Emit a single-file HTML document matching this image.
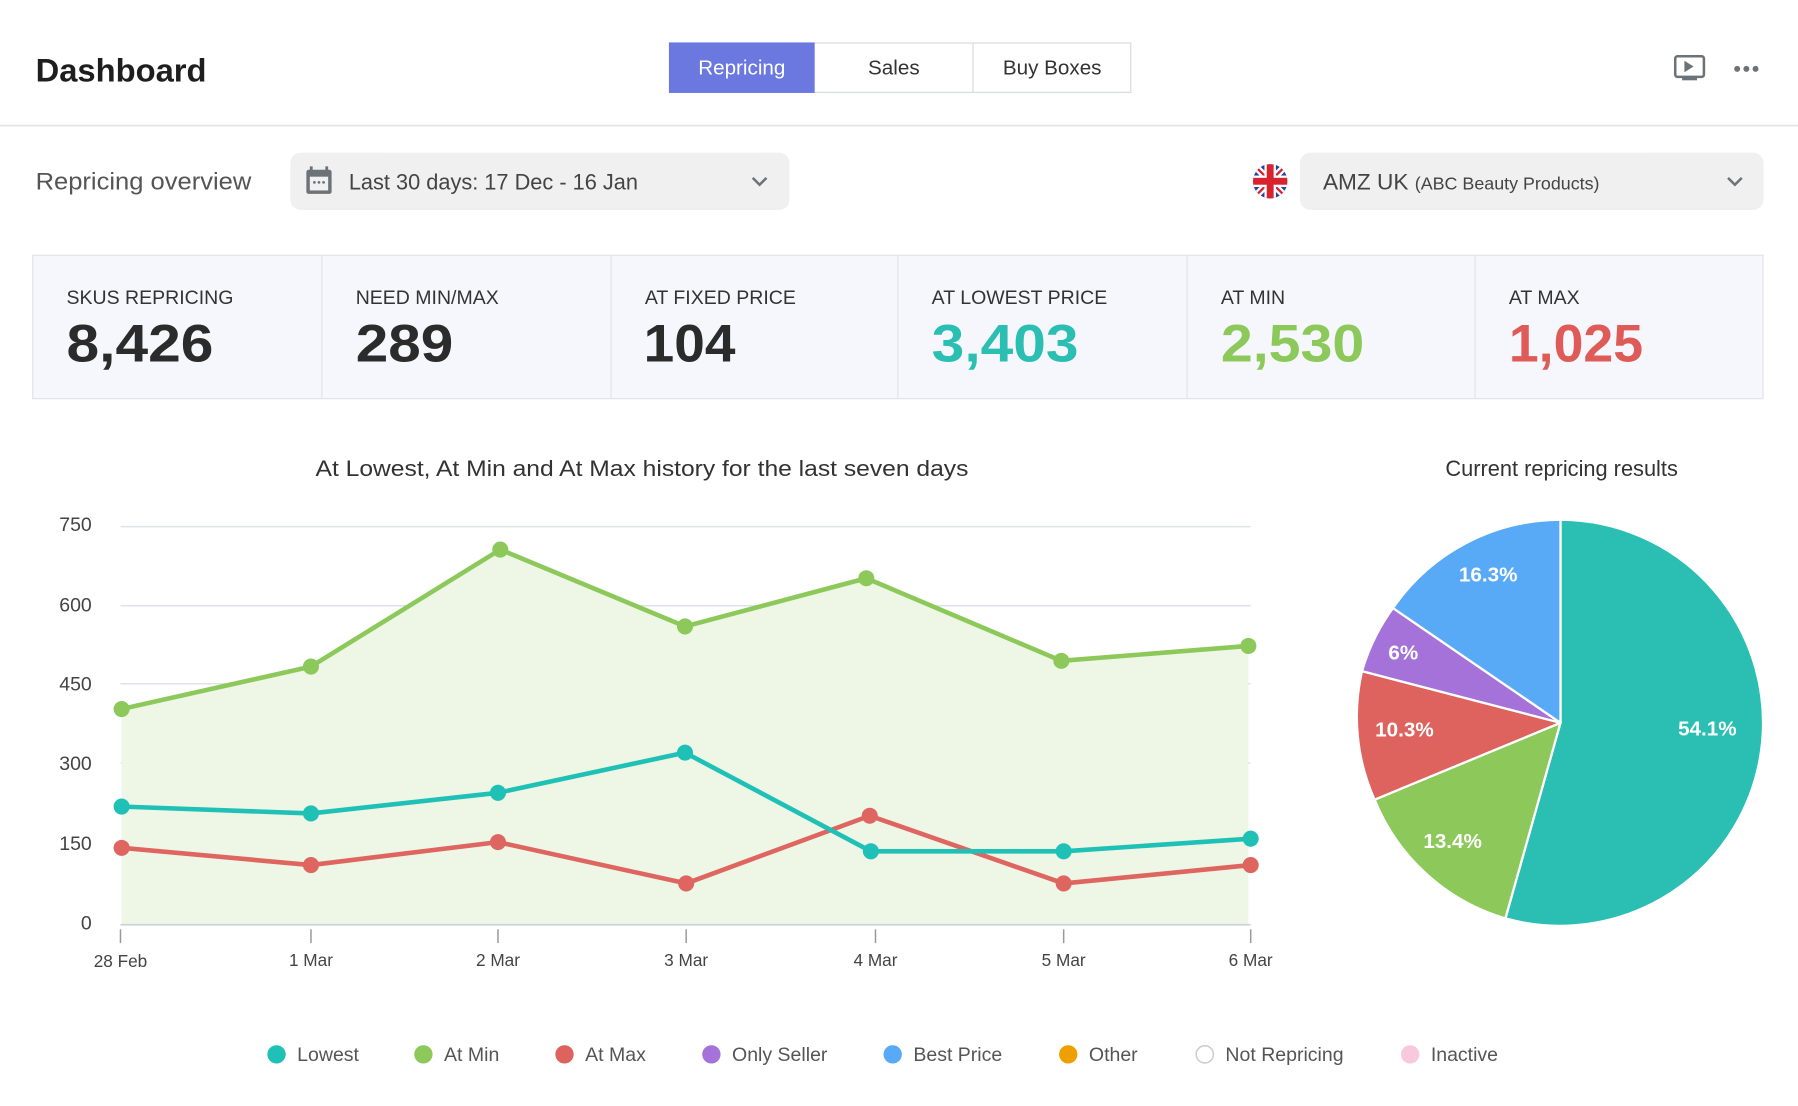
<!DOCTYPE html>
<html><head><meta charset="utf-8"><style>
html,body{margin:0;padding:0;background:#fff;width:1798px;height:1106px;overflow:hidden}
svg{display:block}
text{font-family:"Liberation Sans",sans-serif}
</style></head><body>
<svg width="1798" height="1106" viewBox="0 0 1567 964" preserveAspectRatio="none" xmlns="http://www.w3.org/2000/svg">
<!-- header -->
<text x="31" y="71" font-size="28" font-weight="bold" fill="#1e1e1e" textLength="149" lengthAdjust="spacingAndGlyphs">Dashboard</text>
<rect x="583.5" y="37.5" width="402" height="43" fill="#fff" stroke="#d6d9e0"/>
<rect x="583" y="37" width="127" height="44" fill="#6a78e0"/>
<line x1="848" y1="37" x2="848" y2="81" stroke="#d6d9e0"/>
<text x="646.5" y="65" font-size="18" fill="#fff" text-anchor="middle">Repricing</text>
<text x="779" y="65" font-size="18" fill="#333" text-anchor="middle">Sales</text>
<text x="917" y="65" font-size="18" fill="#333" text-anchor="middle">Buy Boxes</text>
<!-- icons -->
<rect x="1460" y="49" width="25" height="18" rx="2" fill="none" stroke="#6b7378" stroke-width="2.2"/>
<path d="M1468 53 L1476 58 L1468 63 Z" fill="#6b7378"/>
<rect x="1466" y="67" width="13" height="3" fill="#6b7378"/>
<circle cx="1514" cy="60" r="2.6" fill="#6b7378"/><circle cx="1522" cy="60" r="2.6" fill="#6b7378"/><circle cx="1530" cy="60" r="2.6" fill="#6b7378"/>
<line x1="0" y1="109.5" x2="1567" y2="109.5" stroke="#e3e3e3" stroke-width="1.5"/>
<!-- row 2 -->
<text x="31" y="165" font-size="21" fill="#555" textLength="188" lengthAdjust="spacingAndGlyphs">Repricing overview</text>
<rect x="253" y="133" width="435" height="50" rx="9" fill="#f0f0f0"/>
<rect x="267" y="148" width="22" height="21" rx="2" fill="#6b7378"/>
<rect x="270" y="154" width="16" height="12" fill="#f0f0f0"/>
<rect x="270" y="145" width="2.5" height="5" fill="#6b7378"/><rect x="283.5" y="145" width="2.5" height="5" fill="#6b7378"/>
<circle cx="274" cy="159" r="1.2" fill="#6b7378"/><circle cx="278" cy="159" r="1.2" fill="#6b7378"/><circle cx="282" cy="159" r="1.2" fill="#6b7378"/>
<text x="304" y="165" font-size="19" fill="#444" textLength="252" lengthAdjust="spacingAndGlyphs">Last 30 days: 17 Dec - 16 Jan</text>
<path d="M656 155 L662 161 L668 155" fill="none" stroke="#6b7378" stroke-width="2.2"/>
<!-- flag -->
<defs><clipPath id="fc"><circle cx="1107" cy="158" r="15"/></clipPath></defs>
<g clip-path="url(#fc)">
<rect x="1090" y="141" width="34" height="34" fill="#2a3f9c"/>
<path d="M1090 141 L1124 175 M1124 141 L1090 175" stroke="#fff" stroke-width="6"/>
<path d="M1090 141 L1124 175 M1124 141 L1090 175" stroke="#d8232f" stroke-width="2"/>
<rect x="1090" y="153" width="34" height="10" fill="#fff"/><rect x="1102" y="141" width="10" height="34" fill="#fff"/>
<rect x="1090" y="155" width="34" height="6" fill="#d8232f"/><rect x="1104" y="141" width="6" height="34" fill="#d8232f"/>
</g>
<rect x="1133" y="133" width="404" height="50" rx="9" fill="#f0f0f0"/>
<text x="1153" y="165" font-size="19" fill="#444" textLength="241" lengthAdjust="spacingAndGlyphs">AMZ UK <tspan font-size="15">(ABC Beauty Products)</tspan></text>
<path d="M1506 155 L1512 161 L1518 155" fill="none" stroke="#6b7378" stroke-width="2.2"/>
<!-- cards -->
<rect x="28.5" y="222.5" width="1508" height="125" fill="#f6f7fc" stroke="#e0e2e8"/>
<g stroke="#e0e2e8"><line x1="280.5" y1="223" x2="280.5" y2="347"/><line x1="532.5" y1="223" x2="532.5" y2="347"/><line x1="782.5" y1="223" x2="782.5" y2="347"/><line x1="1034.5" y1="223" x2="1034.5" y2="347"/><line x1="1285.5" y1="223" x2="1285.5" y2="347"/></g>
<g font-size="17" fill="#333">
<text x="58" y="265">SKUS REPRICING</text><text x="310" y="265">NEED MIN/MAX</text><text x="562" y="265">AT FIXED PRICE</text>
<text x="812" y="265">AT LOWEST PRICE</text><text x="1064" y="265">AT MIN</text><text x="1315" y="265">AT MAX</text></g>
<g font-size="46" font-weight="bold">
<text x="58" y="315" fill="#2b2b2b" textLength="128" lengthAdjust="spacingAndGlyphs">8,426</text>
<text x="310" y="315" fill="#2b2b2b" textLength="85" lengthAdjust="spacingAndGlyphs">289</text>
<text x="561" y="315" fill="#2b2b2b" textLength="80" lengthAdjust="spacingAndGlyphs">104</text>
<text x="812" y="315" fill="#2bbfb3" textLength="128" lengthAdjust="spacingAndGlyphs">3,403</text>
<text x="1064" y="315" fill="#8cc95a" textLength="125" lengthAdjust="spacingAndGlyphs">2,530</text>
<text x="1315" y="315" fill="#de5b57" textLength="117" lengthAdjust="spacingAndGlyphs">1,025</text></g>
<!-- line chart -->
<text x="275" y="415" font-size="19" fill="#333" textLength="569" lengthAdjust="spacingAndGlyphs">At Lowest, At Min and At Max history for the last seven days</text>
<g font-size="17" fill="#444" text-anchor="end">
<text x="80" y="463">750</text><text x="80" y="533">600</text><text x="80" y="602">450</text><text x="80" y="671">300</text><text x="80" y="741">150</text><text x="80" y="810">0</text></g>
<g stroke="#dde3ec" stroke-width="1.3"><line x1="105" y1="459" x2="1090" y2="459"/><line x1="105" y1="528" x2="1090" y2="528"/><line x1="105" y1="596" x2="1090" y2="596"/><line x1="105" y1="665" x2="1090" y2="665"/><line x1="105" y1="734" x2="1090" y2="734"/></g>
<path d="M106 618 L271 581 L436 479 L597 546 L755 504 L925 576 L1088 563 L1088 806 L106 806 Z" fill="#eef6e6"/>
<line x1="105" y1="806" x2="1090" y2="806" stroke="#ccd3dc" stroke-width="1.5"/>
<g stroke="#999" stroke-width="1.3"><line x1="105" y1="810" x2="105" y2="822"/><line x1="271" y1="810" x2="271" y2="822"/><line x1="434" y1="810" x2="434" y2="822"/><line x1="598" y1="810" x2="598" y2="822"/><line x1="763" y1="810" x2="763" y2="822"/><line x1="927" y1="810" x2="927" y2="822"/><line x1="1090" y1="810" x2="1090" y2="822"/></g>
<g font-size="15" fill="#444" text-anchor="middle"><text x="105" y="843">28 Feb</text><text x="271" y="842">1 Mar</text><text x="434" y="842">2 Mar</text><text x="598" y="842">3 Mar</text><text x="763" y="842">4 Mar</text><text x="927" y="842">5 Mar</text><text x="1090" y="842">6 Mar</text></g>
<g fill="none" stroke-width="4" stroke-linejoin="round">
<path d="M106 618 L271 581 L436 479 L597 546 L755 504 L925 576 L1088 563" stroke="#8cc95a"/>
<path d="M106 739 L271 754 L434 734 L598 770 L758 711 L927 770 L1090 754" stroke="#de6560"/>
<path d="M106 703 L271 709 L434 691 L597 656 L759 742 L927 742 L1090 731" stroke="#1fc1b6"/>
</g>
<g fill="#8cc95a"><circle cx="106" cy="618" r="7"/><circle cx="271" cy="581" r="7"/><circle cx="436" cy="479" r="7"/><circle cx="597" cy="546" r="7"/><circle cx="755" cy="504" r="7"/><circle cx="925" cy="576" r="7"/><circle cx="1088" cy="563" r="7"/></g>
<g fill="#de6560"><circle cx="106" cy="739" r="7"/><circle cx="271" cy="754" r="7"/><circle cx="434" cy="734" r="7"/><circle cx="598" cy="770" r="7"/><circle cx="758" cy="711" r="7"/><circle cx="927" cy="770" r="7"/><circle cx="1090" cy="754" r="7"/></g>
<g fill="#1fc1b6"><circle cx="106" cy="703" r="7"/><circle cx="271" cy="709" r="7"/><circle cx="434" cy="691" r="7"/><circle cx="597" cy="656" r="7"/><circle cx="759" cy="742" r="7"/><circle cx="927" cy="742" r="7"/><circle cx="1090" cy="731" r="7"/></g>
<!-- pie -->
<text x="1361" y="415" font-size="19" fill="#333" text-anchor="middle">Current repricing results</text>
<g stroke="#fff" stroke-width="2" stroke-linejoin="round">
<path d="M1360 630 L1360 453 A177 177 0 1 1 1312 800.5 Z" fill="#2bbfb3"/>
<path d="M1360 630 L1312 800.5 A177 177 0 0 1 1198 697 Z" fill="#8cc95a"/>
<path d="M1360 630 L1198 697 A177 177 0 0 1 1187 585 Z" fill="#de625e"/>
<path d="M1360 630 L1187 585 A177 177 0 0 1 1214 530 Z" fill="#a472d8"/>
<path d="M1360 630 L1214 530 A177 177 0 0 1 1360 453 Z" fill="#58aaf6"/>
</g>
<g font-size="18" font-weight="bold" fill="#fff" text-anchor="middle">
<text x="1488" y="641">54.1%</text><text x="1266" y="739">13.4%</text><text x="1224" y="642">10.3%</text><text x="1223" y="575">6%</text><text x="1297" y="507">16.3%</text></g>
<!-- legend -->
<g font-size="17" fill="#555">
<circle cx="241" cy="919" r="8" fill="#1fc1b6"/><text x="259" y="925">Lowest</text>
<circle cx="369" cy="919" r="8" fill="#8cc95a"/><text x="387" y="925">At Min</text>
<circle cx="492" cy="919" r="8" fill="#de625e"/><text x="510" y="925">At Max</text>
<circle cx="620" cy="919" r="8" fill="#a472d8"/><text x="638" y="925">Only Seller</text>
<circle cx="778" cy="919" r="8" fill="#58aaf6"/><text x="796" y="925">Best Price</text>
<circle cx="931" cy="919" r="8" fill="#eea000"/><text x="949" y="925">Other</text>
<circle cx="1050" cy="919" r="7.5" fill="#fff" stroke="#ccc" stroke-width="1.3"/><text x="1068" y="925">Not Repricing</text>
<circle cx="1229" cy="919" r="8" fill="#f8c8dc"/><text x="1247" y="925">Inactive</text>
</g>
</svg>
</body></html>
